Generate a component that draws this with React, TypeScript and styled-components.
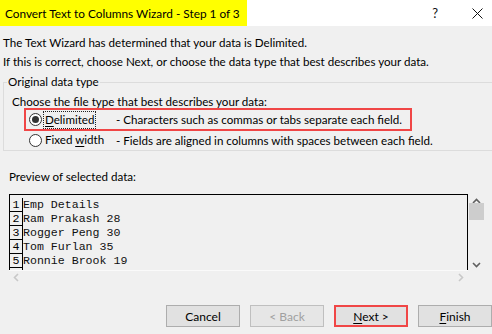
import React from "react";
import styled, { createGlobalStyle } from "styled-components";

const Global = createGlobalStyle`
  html, body { margin: 0; padding: 0; background: #f0f0f0; }
  body { width: 492px; height: 334px; overflow: hidden; font-family: "Lato", "Noto Sans", sans-serif; font-size: 11.6px; color: #000; }
  #root { width: 492px; height: 334px; }
`;

const Window = styled.div`
  width: 492px;
  height: 334px;
  display: flex;
  flex-direction: column;
  background: #f0f0f0;
  overflow: hidden;
`;

const TitleBar = styled.div`
  height: 26px;
  background: #ffffff;
  display: flex;
  align-items: stretch;
  justify-content: space-between;
`;

const TitleText = styled.div`
  background: #ffff00;
  width: 242px;
  padding-left: 5px;
  display: flex;
  align-items: center;
  font-size: 11.8px;
  white-space: nowrap;
  color: #000;
`;

const TitleButtons = styled.div`
  display: flex;
  align-items: center;
  gap: 34px;
  padding-right: 9px;
`;

const HelpGlyph = styled.span`
  font-size: 13px;
  color: #111;
`;

const Body = styled.div`
  flex: 1;
  display: flex;
  flex-direction: column;
  padding: 7px 0 0 0;
`;

const Line = styled.div`
  line-height: 19px;
  height: 19px;
  padding-left: 3px;
  white-space: nowrap;
`;

const Group = styled.fieldset`
  margin: 3px 0 0 3px;
  padding: 0;
  border: 1px solid #dcdcdc;
  border-right: none;
  height: 77px;
  box-sizing: border-box;
`;

const Legend = styled.legend`
  margin-left: 3px;
  padding: 0 1px;
  line-height: 16px;
`;

const Prompt = styled.div`
  padding-left: 8px;
  line-height: 18px;
  margin-top: 3px;
  white-space: nowrap;
`;

const OptionRow = styled.div<{ $hl?: boolean }>`
  display: flex;
  align-items: center;
  height: ${(p) => (p.$hl ? 23 : 20)}px;
  margin: ${(p) => (p.$hl ? "-3px 0 0 20px" : "-1px 0 0 20px")};
  width: 388px;
  box-sizing: border-box;
  border: 2px solid ${(p) => (p.$hl ? "#f04646" : "transparent")};
  border-width: ${(p) => (p.$hl ? "2px" : "0 2px")};
  padding-left: 3px;
  white-space: nowrap;
`;

const Radio = styled.span<{ $on?: boolean }>`
  width: 13px;
  height: 13px;
  box-sizing: border-box;
  border-radius: 50%;
  border: 1px solid #333;
  background: #fff;
  display: flex;
  align-items: center;
  justify-content: center;
  flex: none;
  &::after {
    content: "";
    width: 7px;
    height: 7px;
    border-radius: 50%;
    background: ${(p) => (p.$on ? "#333" : "transparent")};
  }
`;

const OptLabel = styled.span<{ $focus?: boolean }>`
  margin-left: 2px;
  width: 72px;
  flex: none;
  display: flex;
  & > span {
    padding: 0 1px;
    outline: ${(p) => (p.$focus ? "1px dotted #222" : "none")};
    line-height: 16px;
  }
`;

const OptDesc = styled.span``;

const PreviewLabel = styled.div`
  margin-top: 17px;
  padding-left: 9px;
  line-height: 18px;
`;

const PreviewWrap = styled.div`
  margin: 8px 0 0 9px;
  width: 475px;
  display: grid;
  grid-template-columns: 459px 16px;
  grid-template-rows: 76px 13px;
`;

const PreviewBox = styled.div`
  border: 1px solid #000;
  border-bottom: none;
  background: #f0f0f0;
  padding-top: 3px;
  overflow: hidden;
  font-family: "Liberation Mono", "Courier New", monospace;
  font-size: 11.6px;
`;

const Row = styled.div`
  display: flex;
  height: 14px;
  line-height: 14px;
`;

const RowNum = styled.span`
  width: 13px;
  box-sizing: border-box;
  border-right: 1px solid #000;
  border-bottom: 1px solid #000;
  text-align: center;
  flex: none;
  line-height: 13px;
`;

const RowText = styled.span`
  white-space: pre;
  color: #111;
`;

const VScroll = styled.div`
  display: flex;
  flex-direction: column;
  align-items: center;
  justify-content: space-between;
  padding: 4px 0 2px;
`;

const Thumb = styled.div`
  width: 15px;
  height: 17px;
  background: #cdcdcd;
  margin-top: -44px;
`;

const HScroll = styled.div`
  border-top: 1px solid #fafafa;
  display: flex;
  justify-content: space-between;
  align-items: center;
  padding: 0 4px;
`;

const Arrow = styled.svg`
  display: block;
`;

const Buttons = styled.div`
  margin-top: auto;
  margin-bottom: 7px;
  display: flex;
  justify-content: flex-end;
  gap: 10px;
`;

const Button = styled.div<{ $disabled?: boolean; $hl?: boolean }>`
  width: 74px;
  height: 22px;
  box-sizing: border-box;
  border: ${(p) => (p.$hl ? "2px solid #f04646" : p.$disabled ? "1px solid #bfbfbf" : "1px solid #adadad")};
  background: ${(p) => (p.$disabled ? "#e6e6e6" : "#e1e1e1")};
  color: ${(p) => (p.$disabled ? "#a0a0a0" : "#000")};
  display: flex;
  align-items: center;
  justify-content: center;
  font-size: 12px;
`;

const U = styled.span`
  text-decoration: underline;
  text-underline-offset: 2px;
`;

const rows = ["Emp Details", "Ram Prakash 28", "Rogger Peng 30", "Tom Furlan 35", "Ronnie Brook 19", ""];

export default function App() {
  return (
    <Window>
      <Global />
      <TitleBar>
        <TitleText>Convert Text to Columns Wizard - Step 1 of 3</TitleText>
        <TitleButtons>
          <HelpGlyph>?</HelpGlyph>
          <svg width="11" height="11" viewBox="0 0 11 11">
            <path d="M0.5 0.5 L10.5 10.5 M10.5 0.5 L0.5 10.5" stroke="#111" strokeWidth="1" />
          </svg>
        </TitleButtons>
      </TitleBar>
      <Body>
        <Line>The Text Wizard has determined that your data is Delimited.</Line>
        <Line>If this is correct, choose Next, or choose the data type that best describes your data.</Line>
        <Group>
          <Legend>Original data type</Legend>
          <Prompt>Choose the file type that best describes your data:</Prompt>
          <OptionRow $hl>
            <Radio $on />
            <OptLabel $focus>
              <span>
                <U>D</U>elimited
              </span>
            </OptLabel>
            <OptDesc>- Characters such as commas or tabs separate each field.</OptDesc>
          </OptionRow>
          <OptionRow>
            <Radio />
            <OptLabel>
              <span>
                Fixed <U>w</U>idth
              </span>
            </OptLabel>
            <OptDesc>- Fields are aligned in columns with spaces between each field.</OptDesc>
          </OptionRow>
        </Group>
        <PreviewLabel>Preview of selected data:</PreviewLabel>
        <PreviewWrap>
          <PreviewBox>
            {rows.map((r, i) => (
              <Row key={i}>
                <RowNum>{r ? i + 1 : ""}</RowNum>
                <RowText>{r}</RowText>
              </Row>
            ))}
          </PreviewBox>
          <VScroll>
            <Arrow width="9" height="6" viewBox="0 0 9 6">
              <path d="M1 5 L4.5 1.5 L8 5" stroke="#606060" strokeWidth="1.6" fill="none" />
            </Arrow>
            <Thumb />
            <Arrow width="9" height="6" viewBox="0 0 9 6">
              <path d="M1 1 L4.5 4.5 L8 1" stroke="#606060" strokeWidth="1.6" fill="none" />
            </Arrow>
          </VScroll>
          <HScroll>
            <Arrow width="6" height="9" viewBox="0 0 6 9">
              <path d="M5 1 L1.5 4.5 L5 8" stroke="#c8c8c8" strokeWidth="1.6" fill="none" />
            </Arrow>
            <Arrow width="6" height="9" viewBox="0 0 6 9">
              <path d="M1 1 L4.5 4.5 L1 8" stroke="#c8c8c8" strokeWidth="1.6" fill="none" />
            </Arrow>
          </HScroll>
          <div />
        </PreviewWrap>
        <Buttons>
          <Button>Cancel</Button>
          <Button $disabled>&lt; Back</Button>
          <Button $hl>
            <span>
              <U>N</U>ext &gt;
            </span>
          </Button>
          <Button>
            <span>
              <U>F</U>inish
            </span>
          </Button>
        </Buttons>
      </Body>
    </Window>
  );
}
